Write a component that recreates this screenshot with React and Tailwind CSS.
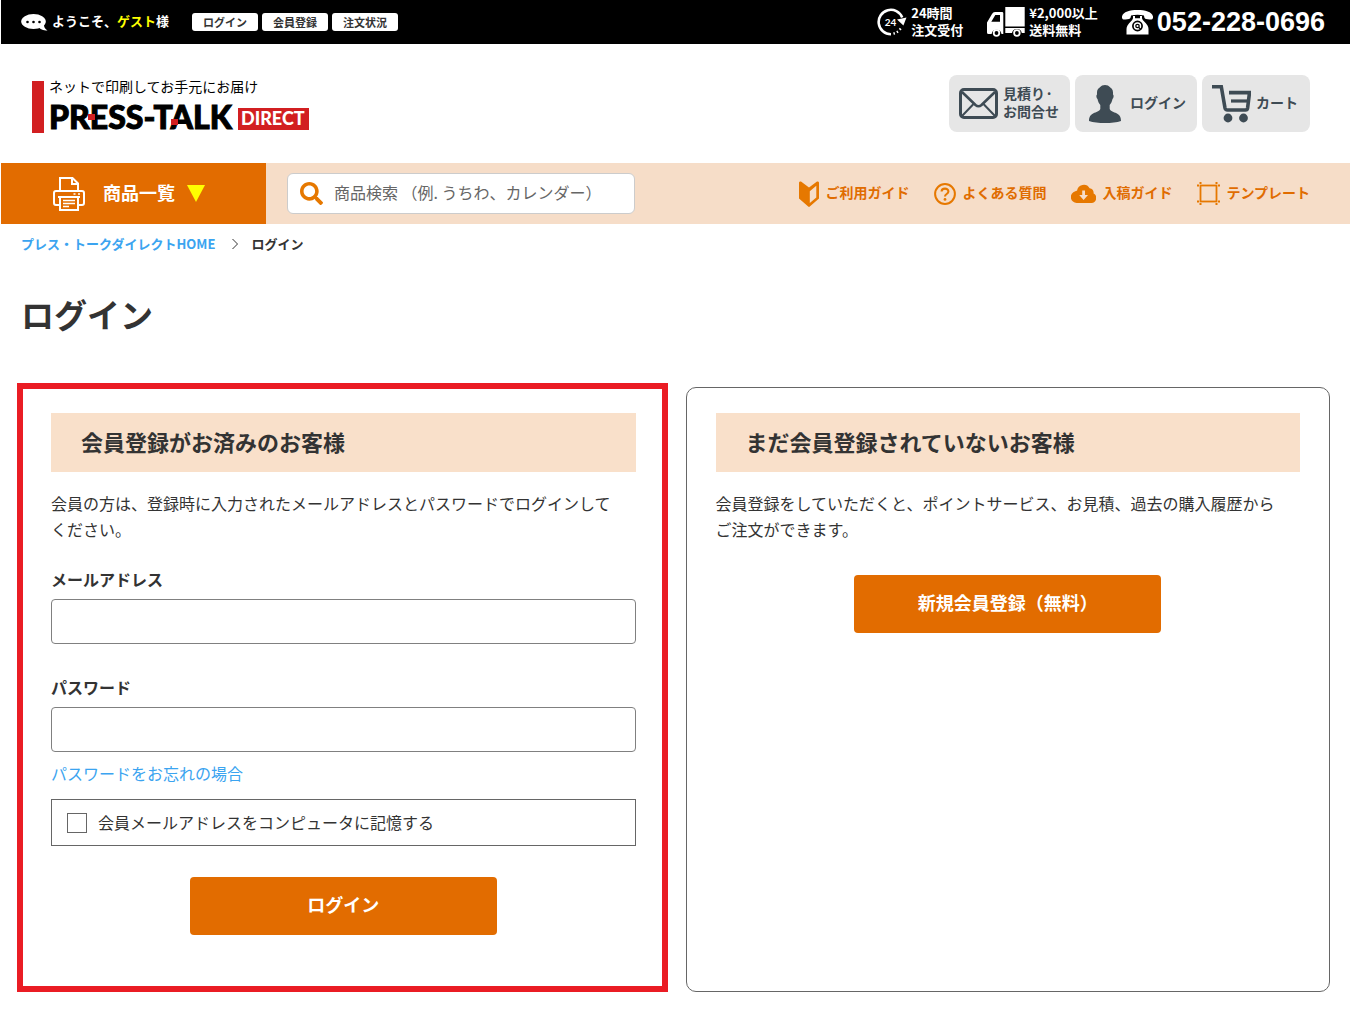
import { FaSearch } from "react-icons/fa";

const topLinks = ["ログイン", "会員登録", "注文状況"];

function BubbleIcon() {
  return (
    <svg width="27" height="17" viewBox="0 0 27 17" aria-hidden="true">
      <ellipse cx="12.5" cy="7.5" rx="12.3" ry="7.4" fill="#fff" />
      <path d="M17 12 L23 10.5 C23 13.5 24 15 26.5 16.5 C22 16.5 19 15.5 17 12 Z" fill="#fff" />
      <circle cx="6.5" cy="8" r="1.3" fill="#000" />
      <circle cx="12.5" cy="8" r="1.3" fill="#000" />
      <circle cx="18.5" cy="8" r="1.3" fill="#000" />
    </svg>
  );
}

function Clock24Icon() {
  return (
    <svg width="30" height="28" viewBox="0 0 30 28" aria-hidden="true">
      <path d="M14 26.2 A12.2 12.2 0 1 1 25.2 9.5" fill="none" stroke="#fff" strokeWidth="2.6" />
      <path d="M20 11.5 L29.5 9.5 L26.4 17.5 Z" fill="#fff" />
      <path d="M16.8 24.2 l0.7 2.4 M19.8 22.8 l1.2 2 M22.3 20.4 l1.8 1.5" stroke="#fff" strokeWidth="1.4" />
      <text x="13.5" y="17.5" textAnchor="middle" fontSize="10" fontWeight="700" fontFamily="Lato, sans-serif" fill="#fff">24</text>
    </svg>
  );
}

function TruckIcon() {
  return (
    <svg width="38" height="30" viewBox="0 0 38 30" aria-hidden="true">
      <rect x="18.3" y="0" width="19.4" height="19.5" fill="#fff" />
      <path
        fillRule="evenodd"
        d="M8 5 H15 Q16.3 5 16.3 6.3 V27 H14.5 A5 5 0 0 0 4.6 27 H1.5 Q0 27 0 25.5 V15.5 L5 7 Q6 5 8 5 Z M8.3 8 L4.3 14.8 H13 V8 Z"
        fill="#fff"
      />
      <path d="M18.3 21 H37.7 V26 H34.8 A5 5 0 0 0 25 26 H18.3 Z" fill="#fff" />
      <circle cx="9.5" cy="26" r="2.8" fill="#000" stroke="#fff" strokeWidth="1.8" />
      <circle cx="29.9" cy="26" r="2.8" fill="#000" stroke="#fff" strokeWidth="1.8" />
    </svg>
  );
}

function PhoneIcon() {
  return (
    <svg width="31" height="25" viewBox="0 0 31 25" aria-hidden="true">
      <path
        d="M0 6.5 C1 1.5 8 0 15.5 0 C23 0 30 1.5 31 6.5 C31.3 9 30 9.8 27.5 9.5 L24 9 C22.3 8.7 22.3 7.5 22 5.6 C18 4.6 13 4.6 9 5.6 C8.7 7.5 8.7 8.7 7 9 L3.5 9.5 C1 9.8 -0.3 9 0 6.5 Z"
        fill="#fff"
      />
      <path
        d="M11 6 H13 V8.3 H18 V6 H20 V8.3 C20.5 10.5 23.5 12.5 25.5 15.5 Q26.5 17 26.5 19 V24.5 H4.5 V19 Q4.5 17 5.5 15.5 C7.5 12.5 10.5 10.5 11 8.3 Z"
        fill="#fff"
      />
      <circle cx="15.5" cy="16" r="4.6" fill="#fff" stroke="#000" strokeWidth="1.7" />
      <circle cx="15.5" cy="16" r="1.7" fill="#fff" stroke="#000" strokeWidth="1.3" />
      <path d="M16.8 17.5 L19 19.5" stroke="#000" strokeWidth="1.3" />
    </svg>
  );
}

function Logo() {
  return (
    <svg className="block overflow-visible" width="278" height="60" viewBox="0 0 278 60" role="img" aria-label="PRESS-TALK DIRECT">
      <rect x="0" y="7" width="12" height="52" fill="#d21f21" />
      <text x="17" y="18" fontSize="14" fontFamily="'Noto Sans CJK JP', sans-serif" fill="#000">
        ネットで印刷してお手元にお届け
      </text>
      <text
        x="17"
        y="55"
        fontSize="32"
        fontWeight="900"
        fontFamily="Lato, sans-serif"
        fill="#000"
        stroke="#000"
        strokeWidth="1"
      >
        PRESS-TALK
      </text>
      <rect x="56" y="40" width="7" height="6" fill="#d21f21" />
      <rect x="139" y="45" width="7" height="6" fill="#d21f21" />
      <rect x="206" y="34" width="71" height="22" fill="#d21f21" />
      <text x="209" y="51" fontSize="18" fontWeight="900" fontFamily="Lato, sans-serif" fill="#fff">
        DIRECT
      </text>
    </svg>
  );
}

function MailIcon() {
  return (
    <svg width="39" height="31" viewBox="0 0 39 31" fill="none" stroke="#3e4b54" aria-hidden="true">
      <rect x="1.5" y="1.5" width="36" height="28" rx="3.5" strokeWidth="3" />
      <path d="M3 4 L16.5 17 Q19.5 19.5 22.5 17 L36 4" strokeWidth="2.6" />
      <path d="M3 28 L14.5 16 M36 28 L24.5 16" strokeWidth="2" />
    </svg>
  );
}

function PersonIcon() {
  return (
    <svg width="32" height="38" viewBox="0 0 32 38" fill="#3e4b54" aria-hidden="true">
      <path d="M16 0 C18 0 20 0.8 21.3 2.6 C23.8 4 24.2 6.5 24 9.5 C25 10 24.8 13 23.5 14 C23 16.5 22 18.5 20.7 20 V24 C21.5 26.5 25 27 27.5 28.2 C31 30 32 32.5 32 36 C28 37.4 22 38 16 38 C10 38 4 37.4 0 36 C0 32.5 1 30 4.5 28.2 C7 27 10.5 26.5 11.3 24 V20 C10 18.5 9 16.5 8.5 14 C7.2 13 7 10 8 9.5 C7.8 6.5 8.2 4 10.7 2.6 C12 0.8 14 0 16 0 Z" />
    </svg>
  );
}

function CartIcon() {
  return (
    <svg width="39" height="38" viewBox="0 0 39 38" fill="none" stroke="#3e4b54" aria-hidden="true">
      <path d="M0 1.8 H9.3 L13 23 Q13.4 25 15.5 25 H33.5 Q35.3 25 35.6 23 L37.5 7.6 H17" strokeWidth="3.6" />
      <path d="M19 16 H36" strokeWidth="3.2" />
      <circle cx="16" cy="33" r="4.4" fill="#3e4b54" stroke="none" />
      <circle cx="31.5" cy="33" r="4.4" fill="#3e4b54" stroke="none" />
    </svg>
  );
}

function PrinterIcon() {
  return (
    <svg width="32" height="34" viewBox="0 0 32 34" fill="none" stroke="#fff" strokeWidth="2" aria-hidden="true">
      <path d="M7 14 V1 H19.5 L25 6.5 V14 M19 1 V7 H25" />
      <path d="M7 28 H3 Q1 28 1 26 V16 Q1 14 3 14 H29 Q31 14 31 16 V26 Q31 28 29 28 H25" />
      <path d="M5 20 H27 M7 20 V33 H25 V20" />
      <path d="M10 23.5 H22 M10 26.5 H22 M10 29.5 H16" strokeWidth="1.6" />
      <path d="M20.5 17 H22.5 M25 17 H27" strokeWidth="1.6" />
    </svg>
  );
}

function BeginnerIcon() {
  return (
    <svg width="20" height="26" viewBox="0 0 20 26" aria-hidden="true">
      <path
        fillRule="evenodd"
        d="M0 1.5 Q0.5 0 2 0.6 L10 6.5 L18 0.6 Q19.5 0 20 1.5 V17.5 L10.8 25.6 Q10 26.2 9.2 25.6 L0 17.5 Z M17.3 4.8 L10.8 10.2 V22 L17.3 16.4 Z"
        fill="#e67800"
      />
    </svg>
  );
}

function QuestionIcon() {
  return (
    <svg width="22" height="22" viewBox="0 0 22 22" fill="none" stroke="#e67800" aria-hidden="true">
      <circle cx="11" cy="11" r="9.9" strokeWidth="2" />
      <path d="M7.6 8.6 C7.6 4.6 14.4 4.6 14.4 8.6 C14.4 11 11 11 11 13.4" strokeWidth="2.1" />
      <circle cx="11" cy="16.4" r="1.4" fill="#e67800" stroke="none" />
    </svg>
  );
}

function CloudIcon() {
  return (
    <svg width="25" height="19" viewBox="0 0 25 19" aria-hidden="true">
      <path
        d="M6 19 A6 6 0 0 1 4.3 7.2 Q5 6.6 6 6.8 A6.8 6.8 0 0 1 18.6 4.2 A5 5 0 0 1 22.6 9.6 A5 5 0 0 1 20.5 19 Z"
        fill="#e67800"
      />
      <path d="M11.2 6.5 H14 V11 H17 L12.6 16 L8.2 11 H11.2 Z" fill="#f6ddc8" />
    </svg>
  );
}

function TemplateIcon() {
  return (
    <svg width="23" height="23" viewBox="0 0 23 23" fill="none" stroke="#e67800" aria-hidden="true">
      <rect x="3.5" y="3.5" width="16" height="16" strokeWidth="1.8" />
      <path
        d="M0 3.5 H2 M3.5 0 V2 M21 3.5 H23 M19.5 0 V2 M0 19.5 H2 M3.5 21 V23 M21 19.5 H23 M19.5 21 V23"
        strokeWidth="2"
      />
    </svg>
  );
}

const guides = [
  { label: "ご利用ガイド", Icon: BeginnerIcon },
  { label: "よくある質問", Icon: QuestionIcon },
  { label: "入稿ガイド", Icon: CloudIcon },
  { label: "テンプレート", Icon: TemplateIcon },
];

function TopBar() {
  return (
    <div className="flex h-11 items-center justify-between bg-black pl-5 pr-[25px] font-bold text-white">
      <div className="flex items-center">
        <BubbleIcon />
        <p className="ml-1 pb-0.5 text-[13px] leading-5">
          ようこそ、<span className="text-[#ffff00]">ゲスト</span>様
        </p>
        <div className="ml-[23px] flex gap-1">
          {topLinks.map((label) => (
            <a
              key={label}
              href="#"
              className="flex h-[18px] w-[66px] items-center justify-center rounded-[3px] bg-white text-[11px] leading-4 text-[#333]"
            >
              {label}
            </a>
          ))}
        </div>
      </div>

      <div className="flex items-center gap-6">
        <div className="flex items-center gap-1">
          <Clock24Icon />
          <p className="pb-0.5 text-[13px] leading-[17px]">24時間<br />注文受付</p>
        </div>
        <div className="flex items-center gap-1">
          <TruckIcon />
          <p className="pb-0.5 text-[13px] leading-[17px]">¥2,000以上<br />送料無料</p>
        </div>
        <a href="tel:052-228-0696" className="flex items-center gap-1">
          <PhoneIcon />
          <span className="font-['Liberation_Sans',sans-serif] text-[27px] leading-10">
            052-228-0696
          </span>
        </a>
      </div>
    </div>
  );
}

function Header() {
  return (
    <header className="flex h-[119px] items-center justify-between pl-[31px] pr-10">
      <a href="#"><Logo /></a>
      <div className="flex gap-[5px] text-sm font-bold leading-[18px] text-[#3e4b54]">
        <a href="#" className="flex h-[57px] items-center gap-[5px] rounded-lg bg-[#e6e6e6] pl-[10px] pr-[11px]">
          <MailIcon />
          <span className="pb-1">見積り·<br />お問合せ</span>
        </a>
        <a href="#" className="flex h-[57px] items-center gap-[9px] rounded-lg bg-[#e6e6e6] pl-[14px] pr-[11px]">
          <PersonIcon />
          <span className="pb-1">ログイン</span>
        </a>
        <a href="#" className="flex h-[57px] items-center gap-[5px] rounded-lg bg-[#e6e6e6] pl-[10px] pr-3">
          <CartIcon />
          <span className="pb-1">カート</span>
        </a>
      </div>
    </header>
  );
}

function NavBar() {
  return (
    <nav className="flex h-[61px] items-center bg-[#f6ddc8] pr-10">
      <button
        type="button"
        className="flex h-full w-[265px] items-center bg-[#e26c00] pl-[52px] text-lg font-bold text-white"
      >
        <PrinterIcon />
        <span className="ml-[18px] pb-1">商品一覧</span>
        <svg className="ml-3" width="18" height="17" viewBox="0 0 18 17" aria-hidden="true">
          <path d="M0 0 H18 L9 17 Z" fill="#ffff00" />
        </svg>
      </button>

      <label className="ml-[21px] flex h-[41px] w-[348px] items-center rounded-md border border-[#ccc] bg-white pl-3 pr-2">
        <FaSearch size={23} className="shrink-0 text-[#e67800]" />
        <input
          type="text"
          aria-label="商品検索"
          placeholder="商品検索 （例. うちわ、カレンダー）"
          className="ml-[11px] w-full min-w-0 pb-1 text-base outline-none placeholder:text-[#666]"
        />
      </label>

      <ul className="ml-auto flex items-center gap-[25px] text-sm font-bold text-[#e06c00]">
        {guides.map(({ label, Icon }) => (
          <li key={label}>
            <a href="#" className="flex items-center gap-[6px]">
              <Icon />
              <span className="pb-1">{label}</span>
            </a>
          </li>
        ))}
      </ul>
    </nav>
  );
}

function PanelTitle({ children }) {
  return (
    <h2 className="flex h-[59px] items-center bg-[#f9e0ca] px-[30px] pb-1 text-[22px] font-bold">
      {children}
    </h2>
  );
}

function LoginPanel() {
  return (
    <section className="mb-1 mr-0.5 border border-[#666] pb-[52px] pl-[29px] pr-[27px] pt-[25px] outline-6 -outline-offset-2 outline-[#ea1c24]">
      <PanelTitle>会員登録がお済みのお客様</PanelTitle>
      <p className="mt-[18px]">
        会員の方は、登録時に入力されたメールアドレスとパスワードでログインして
        <br />
        ください。
      </p>

      <form onSubmit={(e) => e.preventDefault()}>
        <label htmlFor="email" className="mt-6 block font-bold">メールアドレス</label>
        <input
          id="email"
          type="email"
          className="mt-[7px] block h-[45px] w-full rounded-[4px] border border-[#808080] px-3"
        />

        <label htmlFor="password" className="mt-[30px] block font-bold">パスワード</label>
        <input
          id="password"
          type="password"
          className="mt-[7px] block h-[45px] w-full rounded-[4px] border border-[#808080] px-3"
        />

        <a href="#" className="mt-2 block text-[#3ba4f0]">パスワードをお忘れの場合</a>

        <div className="mt-[13px] flex h-[47px] items-center border border-[#666] px-[15px]">
          <input
            id="remember"
            type="checkbox"
            className="size-5 appearance-none border border-[#666] bg-white checked:bg-[#e26c00]"
          />
          <label htmlFor="remember" className="ml-[11px] pb-0.5">会員メールアドレスをコンピュータに記憶する</label>
        </div>

        <button
          type="submit"
          className="mx-auto mt-[31px] block h-[58px] w-[307px] rounded-[4px] bg-[#e26c00] pb-1 text-lg font-bold text-white"
        >
          ログイン
        </button>
      </form>
    </section>
  );
}

function RegisterPanel() {
  return (
    <section className="rounded-[10px] border border-[#666] px-[29px] pb-14 pt-[25px]">
      <PanelTitle>まだ会員登録されていないお客様</PanelTitle>
      <p className="mt-[18px]">
        会員登録をしていただくと、ポイントサービス、お見積、過去の購入履歴から
        <br />
        ご注文ができます。
      </p>
      <button
        type="button"
        className="mx-auto mt-[33px] block h-[58px] w-[307px] rounded-[4px] bg-[#e26c00] pb-1 text-lg font-bold text-white"
      >
        新規会員登録（無料）
      </button>
    </section>
  );
}

export default function App() {
  return (
    <div className="min-h-screen bg-white px-px font-['Noto_Sans_CJK_JP',sans-serif] text-base leading-[26px] text-[#333]" lang="ja">
      <TopBar />
      <Header />
      <NavBar />

      <main className="px-5 pb-5">
        {/* breadcrumb */}
        <div className="mt-[10px] flex items-center text-[13px] font-bold leading-5">
          <a href="#" className="text-[#3ba4f0]">プレス・トークダイレクトHOME</a>
          <svg className="ml-4 mr-3" width="8" height="12" viewBox="0 0 8 12" fill="none" stroke="#333" aria-hidden="true">
            <path d="M1.5 1 L6.5 6 L1.5 11" />
          </svg>
          <span>ログイン</span>
        </div>

        <h1 className="mt-9 text-[33px] font-bold leading-[48px]">ログイン</h1>

        <div className="mt-[49px] grid grid-cols-2 gap-5">
          <LoginPanel />
          <RegisterPanel />
        </div>
      </main>
    </div>
  );
}
